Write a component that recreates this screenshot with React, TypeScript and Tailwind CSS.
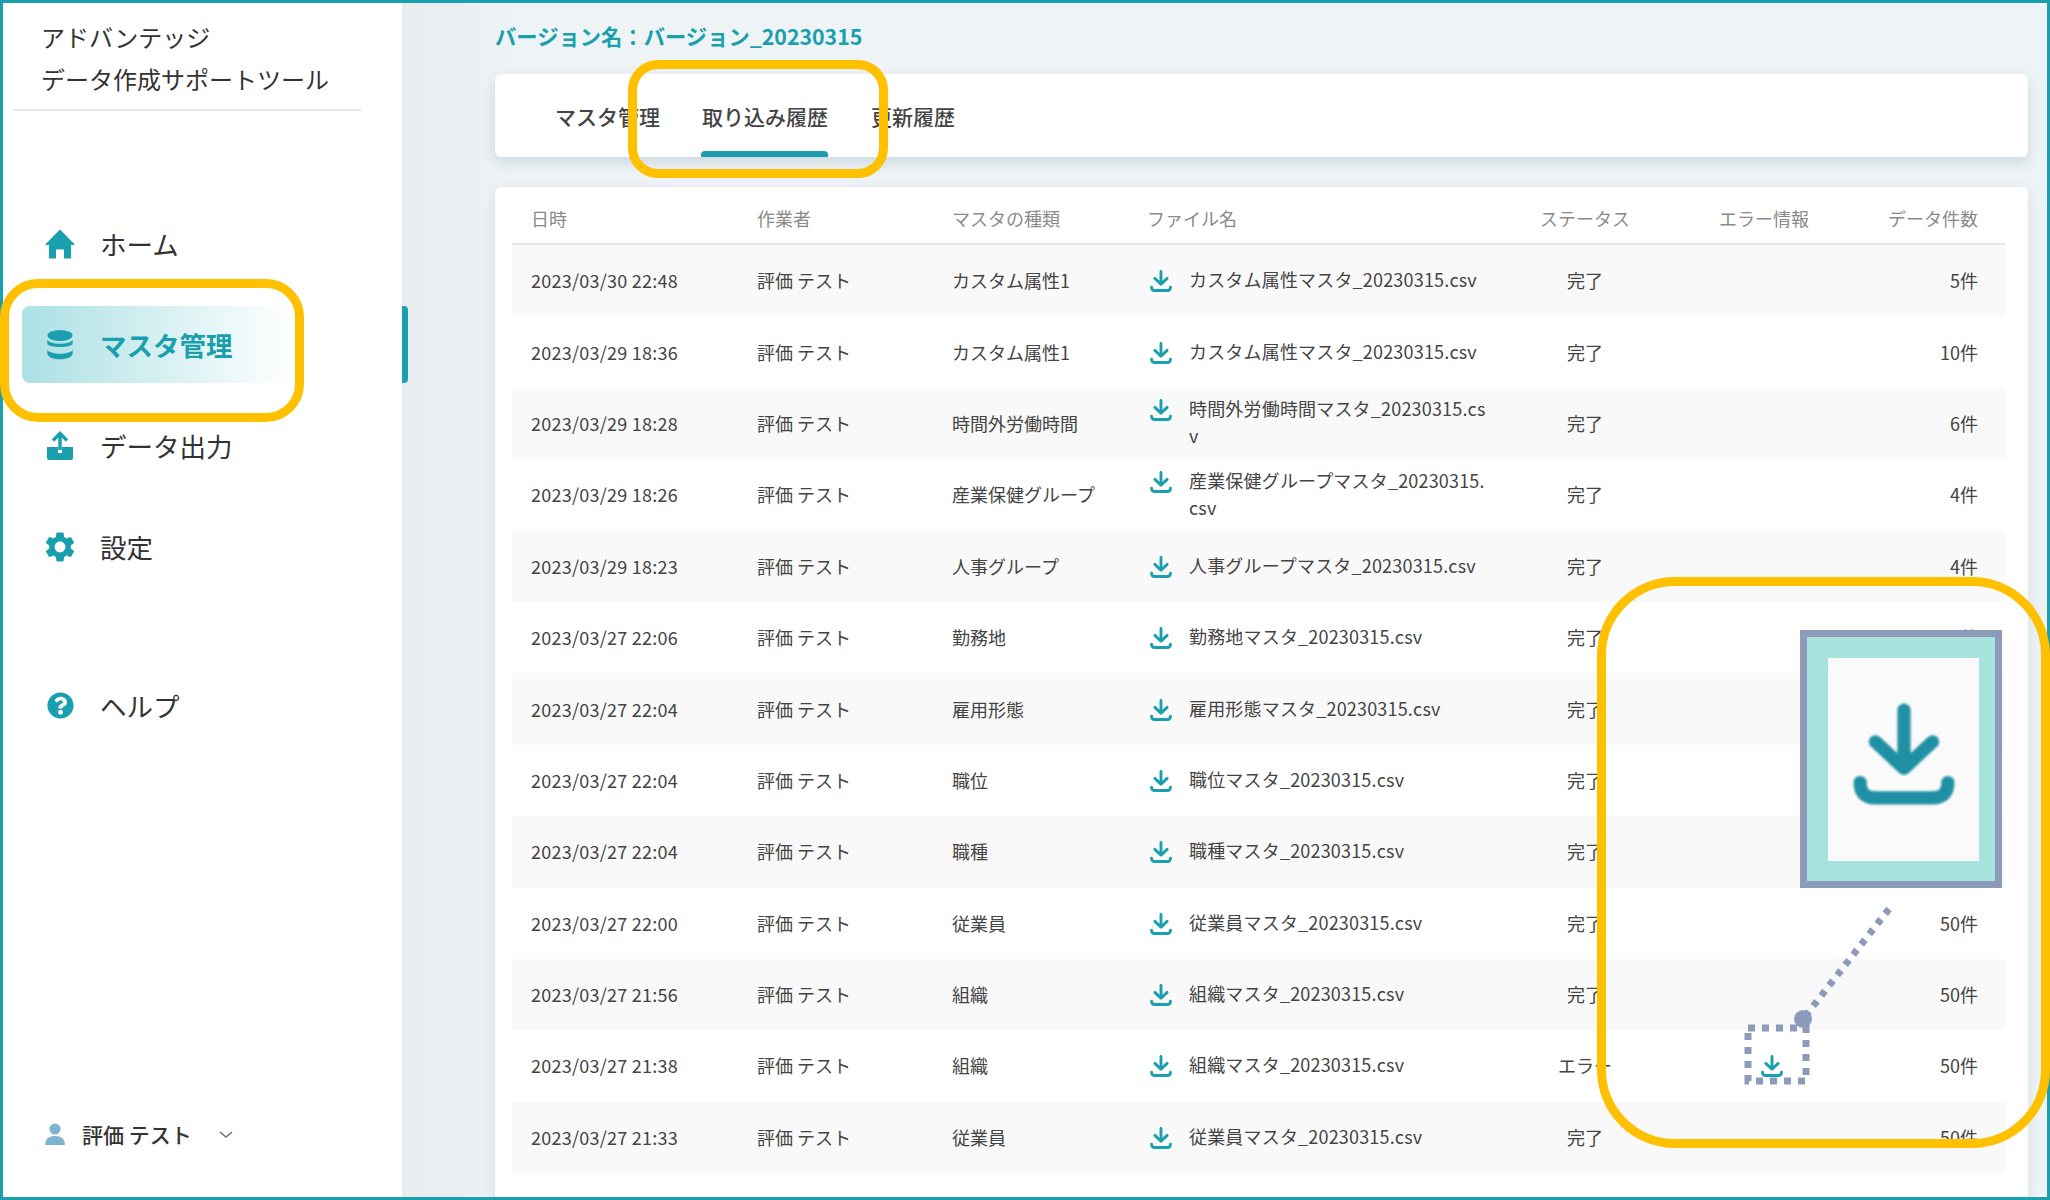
import { ReactNode } from "react";
import { FaQuestionCircle } from "react-icons/fa";
import { MdSettings } from "react-icons/md";

const FONT = '"Noto Sans CJK JP", "Noto Sans", sans-serif';

type Row = {
  date: string;
  kind: string;
  file: string;
  status: string;
  error?: boolean;
  count: string;
};

const rows: Row[] = [
  { date: "2023/03/30 22:48", kind: "カスタム属性1", file: "カスタム属性マスタ_20230315.csv", status: "完了", count: "5件" },
  { date: "2023/03/29 18:36", kind: "カスタム属性1", file: "カスタム属性マスタ_20230315.csv", status: "完了", count: "10件" },
  { date: "2023/03/29 18:28", kind: "時間外労働時間", file: "時間外労働時間マスタ_20230315.csv", status: "完了", count: "6件" },
  { date: "2023/03/29 18:26", kind: "産業保健グループ", file: "産業保健グループマスタ_20230315.csv", status: "完了", count: "4件" },
  { date: "2023/03/29 18:23", kind: "人事グループ", file: "人事グループマスタ_20230315.csv", status: "完了", count: "4件" },
  { date: "2023/03/27 22:06", kind: "勤務地", file: "勤務地マスタ_20230315.csv", status: "完了", count: "4件" },
  { date: "2023/03/27 22:04", kind: "雇用形態", file: "雇用形態マスタ_20230315.csv", status: "完了", count: "4件" },
  { date: "2023/03/27 22:04", kind: "職位", file: "職位マスタ_20230315.csv", status: "完了", count: "4件" },
  { date: "2023/03/27 22:04", kind: "職種", file: "職種マスタ_20230315.csv", status: "完了", count: "4件" },
  { date: "2023/03/27 22:00", kind: "従業員", file: "従業員マスタ_20230315.csv", status: "完了", count: "50件" },
  { date: "2023/03/27 21:56", kind: "組織", file: "組織マスタ_20230315.csv", status: "完了", count: "50件" },
  { date: "2023/03/27 21:38", kind: "組織", file: "組織マスタ_20230315.csv", status: "エラー", error: true, count: "50件" },
  { date: "2023/03/27 21:33", kind: "従業員", file: "従業員マスタ_20230315.csv", status: "完了", count: "50件" },
];

function DownloadIcon({ className }: { className: string }) {
  return (
    <svg viewBox="0 0 100 100" className={className} fill="none" stroke="currentColor" strokeWidth="13" strokeLinecap="round" strokeLinejoin="round">
      <path d="M50 7V62" />
      <path d="M22 38L50 64L78 38" />
      <path d="M7 78Q7 93 22 93H78Q93 93 93 78" />
    </svg>
  );
}

function HomeIcon() {
  return (
    <svg viewBox="0 0 30 30" className="w-[30px] h-[30px]" fill="currentColor">
      <path d="M15 .5L29.5 15.2V16H26V29.5H19V20.5H11V29.5H4V16H.5V15.2Z" />
    </svg>
  );
}

function DatabaseIcon() {
  return (
    <svg viewBox="0 0 30 30" className="w-[30px] h-[30px]" fill="currentColor">
      <ellipse cx="15" cy="5.5" rx="12.5" ry="5.5" />
      <path d="M2.5 10Q2 12 2.5 14C4 18 26 18 27.5 14Q28 12 27.5 10C24 15 6 15 2.5 10Z" />
      <path d="M2.5 20Q2 22 2.5 24C4 31 26 31 27.5 24Q28 22 27.5 20C24 25 6 25 2.5 20Z" />
    </svg>
  );
}

function UploadIcon() {
  return (
    <svg viewBox="0 0 30 30" className="w-[30px] h-[30px]" fill="currentColor">
      <path d="M2 16H13V22H17V16H28V27Q28 29 26 29H4Q2 29 2 27Z" />
      <path d="M15 19V3M8 9.5L15 2.5L22 9.5" fill="none" stroke="currentColor" strokeWidth="3.4" />
    </svg>
  );
}

function NavItem({ icon, label, active }: { icon: ReactNode; label: string; active?: boolean }) {
  return (
    <div
      className={`h-[77px] w-[273px] ml-[22px] pl-[23px] flex items-center gap-[25px] rounded-lg text-[26.5px] ${
        active ? "bg-gradient-to-r from-[#abe0e4] to-white text-[#1a9fae] font-bold" : "text-[#333]"
      }`}
    >
      <span className="w-[30px] h-[30px] flex items-center justify-center text-[#1a9fae] shrink-0">{icon}</span>
      {label}
    </div>
  );
}

function Sidebar() {
  return (
    <aside className="w-[402px] h-full shrink-0 bg-white flex flex-col pt-[16px] pb-[50px]">
      <div className="ml-[13px] w-[348px] pl-[28px] pb-[9px] border-b-2 border-[#e5e8ee] text-[24px] leading-[42px] text-[#333]">
        <div>アドバンテッジ</div>
        <div>データ作成サポートツール</div>
      </div>
      <nav className="mt-[94px] flex flex-col gap-[24px]">
        <NavItem icon={<HomeIcon />} label="ホーム" />
        <NavItem icon={<DatabaseIcon />} label="マスタ管理" active />
        <NavItem icon={<UploadIcon />} label="データ出力" />
        <NavItem icon={<MdSettings size={36} className="shrink-0" />} label="設定" />
      </nav>
      <div className="mt-[82px]">
        <NavItem icon={<FaQuestionCircle size={27} />} label="ヘルプ" />
      </div>
      <div className="mt-auto ml-[45px] flex items-center text-[21px] leading-[32px] font-medium text-[#333]">
        <svg viewBox="0 0 20 22" className="w-[20px] h-[22px] text-[#7db5cc] mr-[17px]" fill="currentColor">
          <circle cx="10" cy="6" r="5.6" />
          <path d="M0 22Q0 13 10 13Q20 13 20 22Z" />
        </svg>
        評価 テスト
        <svg viewBox="0 0 14 7" className="w-[14px] h-[7px] ml-[27px] text-[#777]" fill="none" stroke="currentColor" strokeWidth="1.6">
          <path d="M1 1L7 6L13 1" />
        </svg>
      </div>
    </aside>
  );
}

function Tabs() {
  return (
    <div className="mt-[18px] h-[83px] shrink-0 bg-white rounded-md shadow-[0_6px_14px_rgba(40,90,110,0.16)] pl-[60px] flex gap-[42px] text-[21px] font-medium text-[#444]">
      <div className="flex items-center pt-[2px]">マスタ管理</div>
      <div className="relative flex items-center pt-[2px]">
        取り込み履歴
        <span className="absolute -left-[1px] right-0 bottom-0 h-[6px] rounded-t bg-[#1a9fae]" />
      </div>
      <div className="flex items-center pt-[2px] ml-[1px]">更新履歴</div>
    </div>
  );
}

function HistoryTable() {
  const grid = "grid grid-cols-[245px_195px_195px_373px_130px_210px_145px]";
  return (
    <div className="mt-[30px] flex-1 bg-white rounded-md shadow-[0_4px_14px_rgba(40,90,110,0.12)] pl-[17px] pr-[23px] text-[18px] text-[#444]">
      <div className={`${grid} h-[58px] pt-[6px] items-center border-b-2 border-[#e5e8ee] text-[#8a8a8a]`}>
        <div className="pl-[19px]">日時</div>
        <div>作業者</div>
        <div>マスタの種類</div>
        <div>ファイル名</div>
        <div className="text-center">ステータス</div>
        <div className="pl-[69px]">エラー情報</div>
        <div className="text-right pr-[27px]">データ件数</div>
      </div>
      {rows.map((row, i) => (
        <div key={i} className={`${grid} h-[71.4px] items-center ${i % 2 === 0 ? "bg-[#f9f9f9]" : "bg-white"}`}>
          <div className="pl-[19px] tracking-[0.25px]">{row.date}</div>
          <div>評価 テスト</div>
          <div>{row.kind}</div>
          <div className="-mt-[2px] pl-[3px] flex items-start gap-[17px] leading-[27px]">
            <DownloadIcon className="w-[22px] h-[22px] mt-[4px] text-[#1a9fae] shrink-0" />
            <span className="w-[298px] break-all tracking-[0.18px]">{row.file}</span>
          </div>
          <div className="text-center">{row.status}</div>
          <div className="pl-[111px]">
            {row.error && <DownloadIcon className="w-[22px] h-[22px] text-[#1a9fae]" />}
          </div>
          <div className="text-right pr-[27px]">{row.count}</div>
        </div>
      ))}
    </div>
  );
}

function Annotations() {
  return (
    <>
      <div className="absolute inset-0 border-[3px] border-[#1a9fae]" />
      <div className="absolute left-[628px] top-[60px] w-[260px] h-[118px] border-[9px] border-[#ffc000] rounded-[30px]" />
      <div className="absolute left-0 top-[279px] w-[304px] h-[143px] border-[9px] border-[#ffc000] rounded-[38px]" />
      <div className="absolute left-[1597px] top-[577px] w-[453px] h-[571px] border-[9px] border-[#ffc000] rounded-[78px]" />
      <svg className="absolute left-0 top-0 w-[2050px] h-[1200px]" viewBox="0 0 2050 1200" fill="none" stroke="#8d9bbb">
        <rect x="1748" y="1028" width="58" height="53" strokeWidth="7" strokeDasharray="7 7" />
        <line x1="1889" y1="909" x2="1803" y2="1019" strokeWidth="7" strokeDasharray="6 7" />
        <circle cx="1803" cy="1019" r="9" fill="#8d9bbb" stroke="none" />
      </svg>
      <div className="absolute left-[1800px] top-[630px] w-[202px] h-[258px] border-[7px] border-[#8d9bbb] bg-[#a6e3dc] flex items-center justify-center pl-[5px]">
        <div className="w-[151px] h-[203px] bg-[#fafafa] flex items-center justify-center pb-[10px]">
          <DownloadIcon className="w-[102px] h-[102px] text-[#1f90a3] blur-[1px]" />
        </div>
      </div>
    </>
  );
}

export default function App() {
  return (
    <div className="relative w-[2050px] h-[1200px] flex overflow-hidden" style={{ fontFamily: FONT }}>
      <Sidebar />
      <span className="absolute left-[402px] top-[306px] w-[6px] h-[77px] rounded-r-sm bg-[#1a9fae]" />
      <main className="flex-1 h-full flex flex-col pl-[93px] pr-[22px] pt-[15px] bg-[linear-gradient(90deg,#e7ecef,#eef3f6_7%)]">
        <div className="h-[41px] shrink-0 flex items-center text-[21.3px] font-bold text-[#1a9fae]">
          バージョン名：バージョン_20230315
        </div>
        <Tabs />
        <HistoryTable />
      </main>
      <Annotations />
    </div>
  );
}
